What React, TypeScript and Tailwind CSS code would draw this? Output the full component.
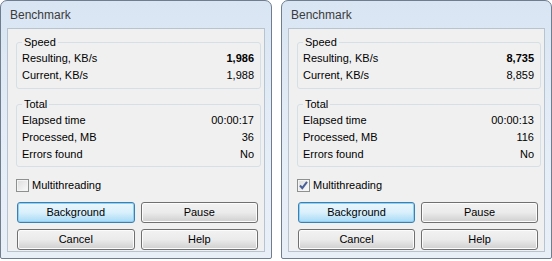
import React from "react";

type Data = {
  resulting: string;
  current: string;
  elapsed: string;
  processed: string;
  errors: string;
  multi: boolean;
  width: string;
};

function Row({ label, value, bold }: { label: string; value: string; bold?: boolean }) {
  return (
    <div className="flex h-[17px] items-center justify-between pl-[5px] pr-[6px]">
      <span>{label}</span>
      <span className={bold ? "font-bold" : ""}>{value}</span>
    </div>
  );
}

function Btn({ label, def }: { label: string; def?: boolean }) {
  return (
    <div
      className={
        "flex h-[21px] flex-1 items-center justify-center rounded-[3px] border " +
        (def
          ? "border-[#3c7fb1] bg-gradient-to-b from-[#eaf6fd] via-[#d9f0fc] to-[#a7d9f5] shadow-[inset_0_0_0_1px_#8ed1f5]"
          : "border-[#707070] bg-gradient-to-b from-[#f2f2f2] via-[#ebebeb] to-[#cfcfcf] shadow-[inset_0_0_0_1px_#fcfcfc]")
      }
    >
      {label}
    </div>
  );
}

function Window({ d }: { d: Data }) {
  return (
    <div
      className={
        d.width +
        " flex h-[259px] flex-col rounded-t-[7px] rounded-b-[2px] border border-[#6f7d8f] bg-gradient-to-b from-[#d9e5f3] via-[#e4edf7] to-[#e9eff7]"
      }
    >
      <div className="flex h-[27px] shrink-0 items-center pl-[9px] text-[12px] text-[#3b3b3b]">Benchmark</div>
      <div className="mx-[6px] mb-[6px] flex flex-1 flex-col border border-[#b8c3d1] bg-[#f0f0f0] pl-[8px] pr-[3px] pt-[6px]">
        <fieldset className="rounded-[3px] border border-[#d5dfe5] px-0 pb-[4px] pt-[1px]">
          <legend className="ml-[5px] px-[2px] leading-[14px]">Speed</legend>
          <Row label="Resulting, KB/s" value={d.resulting} bold />
          <Row label="Current, KB/s" value={d.current} />
        </fieldset>
        <fieldset className="mt-[8px] rounded-[3px] border border-[#d5dfe5] px-0 pb-[3px] pt-[1px]">
          <legend className="ml-[5px] px-[2px] leading-[14px]">Total</legend>
          <Row label="Elapsed time" value={d.elapsed} />
          <Row label="Processed, MB" value={d.processed} />
          <Row label="Errors found" value={d.errors} />
        </fieldset>
        <div className="mt-[11px] flex h-[14px] items-center gap-[3px]">
          <div className="flex h-[13px] w-[13px] items-center justify-center border border-[#8e8f8f] bg-gradient-to-br from-[#dcdcdc] to-[#fbfbfb] shadow-[inset_0_0_0_1px_#f4f4f4]">
            {d.multi && (
              <svg width="11" height="11" viewBox="0 0 11 11">
                <path d="M2 5.5 L4.3 8.2 L9 1.8" fill="none" stroke="#4a5f97" strokeWidth="2" />
              </svg>
            )}
          </div>
          <span>Multithreading</span>
        </div>
        <div className="mt-[10px] flex gap-[6px] pl-[1px] pr-[3px]">
          <Btn label="Background" def />
          <Btn label="Pause" />
        </div>
        <div className="mt-[6px] flex gap-[6px] pl-[1px] pr-[3px]">
          <Btn label="Cancel" />
          <Btn label="Help" />
        </div>
      </div>
    </div>
  );
}

export default function App() {
  const a: Data = {
    resulting: "1,986",
    current: "1,988",
    elapsed: "00:00:17",
    processed: "36",
    errors: "No",
    multi: false,
    width: "w-[272px]",
  };
  const b: Data = {
    resulting: "8,735",
    current: "8,859",
    elapsed: "00:00:13",
    processed: "116",
    errors: "No",
    multi: true,
    width: "w-[271px]",
  };
  return (
    <div
      className="flex h-[261px] w-[552px] gap-[9px] bg-white text-[11px] text-black"
      style={{ fontFamily: '"Liberation Sans", Arial, sans-serif' }}
    >
      <Window d={a} />
      <Window d={b} />
    </div>
  );
}
